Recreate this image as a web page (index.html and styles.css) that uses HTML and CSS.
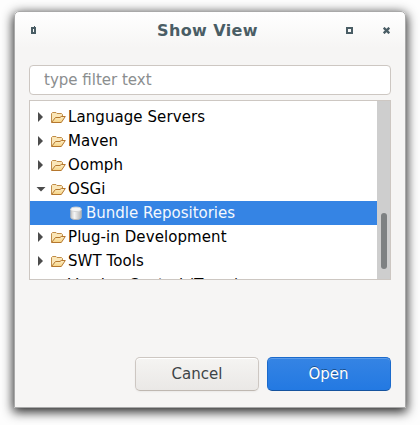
FILE: index.html
```html
<!DOCTYPE html>
<html lang="en">
<head>
<meta charset="utf-8">
<title>Show View</title>
<link rel="stylesheet" href="styles.css">
</head>
<body>
<svg width="0" height="0" class="defs">
  <defs>
    <linearGradient id="gold" x1="0" y1="0" x2="0" y2="1"><stop offset="0" stop-color="#fdeec6"/><stop offset="1" stop-color="#f5d283"/></linearGradient>
    <linearGradient id="steel"><stop offset="0" stop-color="#c9c9c9"/><stop offset=".35" stop-color="#f4f4f4"/><stop offset="1" stop-color="#b4b4b4"/></linearGradient>
    <symbol id="folder" viewBox="0 0 16 16">
      <path d="M1.5 13V4.5L2.5 3.5H6L7 4.5H11.5L12.5 5.5V7.5" fill="#fae6b8" stroke="#c08c48"/>
      <path d="M1.5 13.5L5.5 8.5H10L11.2 7.5H15.3L11.3 13.5Z" fill="url(#gold)" stroke="#b5772e" stroke-linejoin="round"/>
    </symbol>
  </defs>
</svg>
<main class="window">
  <header class="titlebar">
    <svg class="menu" width="5" height="8"><path d="M0 1H3V0H4V1H5V8H0Z M2 3V6H3V3Z" fill="#4a5d65" fill-rule="evenodd"/></svg>
    <h1>Show View</h1>
    <svg class="max" width="7" height="7"><path d="M0 0H7V7H0Z M2 2V5H5V2Z" fill="#4a5d65" fill-rule="evenodd"/></svg>
    <svg class="close" width="7" height="7"><path d="M.7 .7L6.3 6.3M6.3 .7L.7 6.3" stroke="#4a5d65" stroke-width="2.3"/></svg>
  </header>
  <section class="content">
    <input class="filter" type="text" placeholder="type filter text">
    <div class="tree">
      <ul class="rows">
        <li><i class="arrow"></i><svg class="icon"><use href="#folder"/></svg><span>Language Servers</span></li>
        <li><i class="arrow"></i><svg class="icon"><use href="#folder"/></svg><span>Maven</span></li>
        <li><i class="arrow"></i><svg class="icon"><use href="#folder"/></svg><span>Oomph</span></li>
        <li><i class="arrow open"></i><svg class="icon"><use href="#folder"/></svg><span>OSGi</span></li>
        <li class="selected"><svg class="icon" viewBox="0 0 16 16"><path d="M2.8 4V12.5C2.8 15.2 13.2 15.2 13.2 12.5V4Z" fill="url(#steel)" stroke="#b9b9b9"/><ellipse cx="8" cy="4.3" rx="5.2" ry="2.2" fill="#f6f6f6" stroke="#d6d6d6"/></svg><span>Bundle Repositories</span></li>
        <li><i class="arrow"></i><svg class="icon"><use href="#folder"/></svg><span>Plug-in Development</span></li>
        <li><i class="arrow"></i><svg class="icon"><use href="#folder"/></svg><span>SWT Tools</span></li>
        <li><i class="arrow"></i><svg class="icon"><use href="#folder"/></svg><span>Version Control (Team)</span></li>
      </ul>
      <div class="scrollbar"><div class="thumb"></div></div>
    </div>
    <footer class="actions">
      <button class="btn" type="button">Cancel</button>
      <button class="btn primary" type="button">Open</button>
    </footer>
  </section>
</main>
</body>
</html>
```
FILE: styles.css
```css
* { box-sizing: border-box; }
body {
  margin: 0;
  width: 420px;
  height: 425px;
  padding: 11px 14px 17px;
  overflow: hidden;
  background: #fdfdfd;
  font: 15px/24px "DejaVu Sans", sans-serif;
}
.defs { position: absolute; }
.window {
  height: 397px;
  border: 1px solid #a9a9a9;
  border-radius: 5px 5px 0 0;
  background: linear-gradient(#fff, #f6f5f4 36px);
  box-shadow: 0 3px 11px 1px rgba(0, 0, 0, .85);
}
.titlebar {
  display: flex;
  align-items: center;
  height: 37px;
  padding: 0 15px 0 16px;
}
.menu { margin-bottom: 1px; }
.titlebar h1 {
  flex: 1;
  margin: 0;
  padding-left: 33px;
  color: #4a5d65;
  font-size: 16px;
  letter-spacing: .4px;
  text-align: center;
}
.max { margin-right: 30px; }
.content { padding: 16px 14px 0; }
.filter {
  display: block;
  width: 100%;
  height: 30px;
  padding: 0 14px;
  border: 1px solid #cdc7c2;
  border-radius: 4px;
  background: #fff;
  font: inherit;
}
.filter::placeholder { color: #8b8e8f; opacity: 1; }
.tree {
  display: flex;
  height: 180px;
  margin-top: 5px;
  border: 1px solid #cdc7c2;
  background: #fff;
  overflow: hidden;
}
.rows {
  flex: 1;
  margin: 0;
  padding: 4px 0 0;
  list-style: none;
  color: #000;
  letter-spacing: .08px;
}
.rows li {
  display: flex;
  align-items: center;
  height: 24px;
  padding-left: 8px;
  white-space: nowrap;
}
.rows .selected {
  padding-left: 38px;
  background: #3584e4;
  color: #f4f8fd;
  letter-spacing: 0;
}
.arrow {
  width: 5px;
  height: 10px;
  margin-right: 7px;
  background: #4c4c4c;
  clip-path: polygon(0 0, 100% 50%, 0 100%);
}
.arrow.open {
  width: 10px;
  height: 5px;
  margin: 0 4px 0 -2px;
  clip-path: polygon(0 0, 100% 0, 50% 100%);
}
.icon { width: 16px; height: 16px; margin-right: 2px; }
.scrollbar { width: 13px; padding: 112px 3px 0 4px; background: #cecece; }
.thumb { height: 56px; border-radius: 3px; background: #7e8182; }
.actions {
  display: flex;
  justify-content: flex-end;
  gap: 8px;
  margin-top: 77px;
}
.btn {
  width: 124px;
  height: 34px;
  padding: 0;
  border: 1px solid #cdc7c2;
  border-bottom-color: #bfb8b1;
  border-radius: 5px;
  background: linear-gradient(#f5f4f2, #eae8e6);
  box-shadow: inset 0 1px #fff, 0 1px 2px rgba(0, 0, 0, .05);
  color: #3d4446;
  font: inherit;
}
.btn.primary {
  border-color: #1b6acb;
  border-bottom-color: #15539e;
  background: linear-gradient(#3584e4, #2379e2);
  box-shadow: inset 0 1px rgba(255, 255, 255, .2);
  color: #fff;
  text-indent: -1px;
  text-shadow: 0 -1px rgba(0, 0, 0, .4);
}
```
